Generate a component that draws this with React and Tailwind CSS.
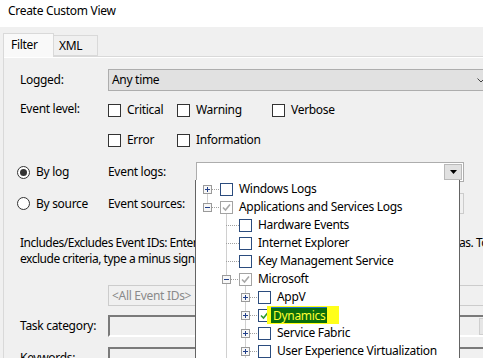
import React from 'react';

const treeRows = [
  { level: 0, label: 'Windows Logs', exp: '+', check: 'none' },
  { level: 0, label: 'Applications and Services Logs', exp: '-', check: 'partial' },
  { level: 1, label: 'Hardware Events', check: 'none' },
  { level: 1, label: 'Internet Explorer', check: 'none' },
  { level: 1, label: 'Key Management Service', check: 'none' },
  { level: 1, label: 'Microsoft', exp: '-', check: 'partial' },
  { level: 2, label: 'AppV', exp: '+', check: 'none' },
  { level: 2, label: 'Dynamics', exp: '+', check: 'checked', highlight: true },
  { level: 2, label: 'Service Fabric', exp: '+', check: 'none' },
  { level: 2, label: 'User Experience Virtualization', exp: '+', check: 'none' },
];

const indent = { 0: 'pl-[24px]', 1: 'pl-[43px]', 2: 'pl-[62px]' };

function Box({ label }) {
  return (
    <div className="flex items-center">
      <div className="w-[13px] h-[13px] border border-[#333333] bg-white" />
      <span className="ml-[6px]">{label}</span>
    </div>
  );
}

function Radio({ label, on }) {
  return (
    <div className="flex items-center">
      <div className="w-[13px] h-[13px] rounded-full border border-[#333333] bg-white flex items-center justify-center">
        {on && <div className="w-[7px] h-[7px] rounded-full bg-[#333333]" />}
      </div>
      <span className="ml-[6px]">{label}</span>
    </div>
  );
}

function TreeCheck({ state }) {
  const border = state === 'partial' ? 'border-[#a3a3a3]' : 'border-[#2b4c7e]';
  return (
    <div className={`w-[13px] h-[13px] border ${border} bg-white shrink-0`}>
      {state !== 'none' && (
        <svg width="11" height="11" viewBox="0 0 11 11">
          <path d="M2 5.5 L4.5 8 L9 2.5" fill="none" stroke={state === 'partial' ? '#a8a8a8' : '#2f9a2f'} strokeWidth="1.6" />
        </svg>
      )}
    </div>
  );
}

// expanders and dotted connector lines of the tree
function TreeLines() {
  const cy = (i) => 9.5 + 18 * i;
  const dots = { stroke: '#a0a0a0', strokeDasharray: '1 1', strokeWidth: 1, fill: 'none' };
  const expanders = [];
  const lines = [];
  treeRows.forEach((r, i) => {
    const gx = 11 + 19 * r.level;
    if (r.exp) {
      const x = gx - 4;
      lines.push(<line key={`h${i}`} x1={gx + 5} y1={cy(i)} x2={gx + 13} y2={cy(i)} {...dots} />);
      expanders.push(
        <g key={`e${i}`}>
          <rect x={x + 0.5} y={cy(i) - 4} width="8" height="8" fill="#f7f7f7" stroke="#9a9a9a" />
          <line x1={x + 2} y1={cy(i)} x2={x + 7} y2={cy(i)} stroke="#22408a" />
          {r.exp === '+' && <line x1={x + 4.5} y1={cy(i) - 2.5} x2={x + 4.5} y2={cy(i) + 2.5} stroke="#22408a" />}
        </g>
      );
    } else {
      lines.push(<line key={`h${i}`} x1={gx} y1={cy(i)} x2={gx + 13} y2={cy(i)} {...dots} />);
    }
  });
  return (
    <svg className="absolute left-0 top-0 pointer-events-none" width="263" height="200">
      <line x1="11.5" y1={cy(0) + 5} x2="11.5" y2={cy(1) - 4} {...dots} />
      <line x1="30.5" y1={cy(1) + 7} x2="30.5" y2="200" {...dots} />
      <line x1="49.5" y1={cy(5) + 7} x2="49.5" y2="200" {...dots} />
      {lines}
      {expanders}
    </svg>
  );
}

function DropArrow({ disabled }) {
  return (
    <svg width="7" height="4" viewBox="0 0 7 4">
      <path d="M0 0 H7 L3.5 4 Z" fill={disabled ? '#b4b4b4' : '#000000'} />
    </svg>
  );
}

export default function App() {
  return (
    <div className="relative w-[483px] h-[358px] overflow-hidden bg-[#f0f0f0] text-[12px] leading-[16px] tracking-[-0.3px] text-black font-['Noto_Sans',sans-serif]">
      {/* title bar */}
      <div className="h-[27px] bg-white pl-[8px] pt-[3px]">Create Custom View</div>

      {/* tabs */}
      <div className="flex items-end pl-[3px] h-[29px]">
        <div className="relative z-10 w-[51px] h-[24px] -mb-px bg-[#f9f9f9] border border-b-0 border-[#d9d9d9] pl-[7px] pt-[3px]">Filter</div>
        <div className="w-[44px] h-[21px] border border-l-0 border-[#d9d9d9] pl-[5px] pt-[2px]">XML</div>
      </div>

      {/* filter panel */}
      <div className="ml-[3px] border-l border-t border-[#d9d9d9] w-[520px] h-[400px]">
        <div className="border-t border-white pl-[13px]">
          <div className="flex items-center mt-[11px] pl-[3px]">
            <span className="w-[88px]">Logged:</span>
            <div className="w-[383px] h-[22px] bg-[#e1e1e1] border border-[#adadad] flex items-center justify-between pl-[3px] pr-[5px]">
              <span>Any time</span>
              <svg width="8" height="5" viewBox="0 0 8 5">
                <path d="M0.5 0.5 L4 4 L7.5 0.5" fill="none" stroke="#444" />
              </svg>
            </div>
          </div>

          <div className="flex items-center h-[20px] mt-[9px] pl-[3px]">
            <span className="w-[88px] -mt-[3px]">Event level:</span>
            <div className="w-[69px]"><Box label="Critical" /></div>
            <div className="w-[95px]"><Box label="Warning" /></div>
            <Box label="Verbose" />
          </div>

          <div className="flex items-center h-[20px] mt-[10px] pl-[91px]">
            <div className="w-[69px]"><Box label="Error" /></div>
            <Box label="Information" />
          </div>

          <div className="flex items-center mt-[12px]">
            <div className="w-[91px]"><Radio label="By log" on /></div>
            <span className="w-[88px]">Event logs:</span>
            <div className="w-[268px] h-[20px] bg-white border border-[#adadad] flex justify-end pt-px pr-px">
              <div className="w-[18px] h-[16px] bg-[#e1e1e1] border border-[#b9b9b9] flex items-center justify-center">
                <DropArrow />
              </div>
            </div>
          </div>

          <div className="flex items-center mt-[11px]">
            <div className="w-[91px]"><Radio label="By source" /></div>
            <span className="w-[88px]">Event sources:</span>
            <div className="w-[268px] h-[21px] bg-[#f0f0f0] border border-[#cccccc]" />
          </div>

          <div className="mt-[21px] pl-[3px] whitespace-nowrap tracking-[-0.48px]">
            <div>Includes/Excludes Event IDs: Enter ID numbers and/or ID ranges separated by commas. To</div>
            <div>exclude criteria, type a minus sign first. For example 1,3,5-99,-76</div>
          </div>

          <div className="ml-[91px] mt-[18px] w-[400px] h-[21px] border border-[#cccccc] flex items-center pl-[3px] text-[#8a8a8a]">
            &lt;All Event IDs&gt;
          </div>

          <div className="flex items-center mt-[9px] pl-[3px]">
            <span className="w-[88px]">Task category:</span>
            <div className="w-[390px] h-[22px] border-2 border-[#7a7a7a] border-b-white border-r-white bg-[#f0f0f0] flex justify-end items-center pr-[3px]">
              <div className="w-[14px] h-[17px] bg-[#e6e6e6] border border-[#cfcfcf] flex items-center justify-center">
                <DropArrow disabled />
              </div>
            </div>
          </div>

          <div className="flex items-center mt-[10px] pl-[3px]">
            <span className="w-[88px]">Keywords:</span>
            <div className="w-[390px] h-[22px] border-2 border-[#7a7a7a] border-b-white border-r-white bg-[#f0f0f0]" />
          </div>
        </div>
      </div>

      {/* open dropdown list of Event logs */}
      <div className="absolute left-[195px] top-[180px] w-[265px] h-[200px] bg-white border-x border-b border-[#646464] z-20">
        <TreeLines />
        {treeRows.map((r) => (
          <div key={r.label} className={`relative flex items-center h-[18px] whitespace-nowrap ${indent[r.level]}`}>
            <TreeCheck state={r.check} />
            {r.highlight ? (
              <span className="-ml-[4px] bg-[#ffff1a] pl-[4px] pr-[12px] py-px">
                <span className="block bg-[#0b6e0b] border-t border-[#1c6fd0] px-[2px] text-[#ffff33] leading-[15px]">{r.label}</span>
              </span>
            ) : (
              <span className="ml-[6px]">{r.label}</span>
            )}
          </div>
        ))}
      </div>
    </div>
  );
}
